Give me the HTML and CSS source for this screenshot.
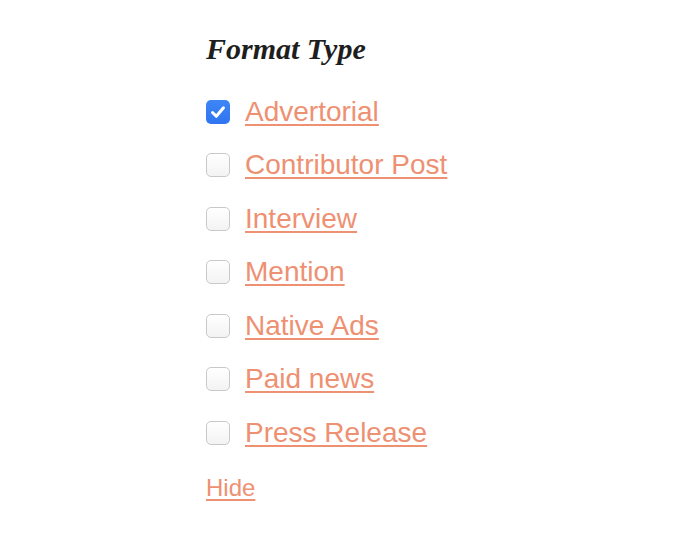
FILE: index.html
```html
<!DOCTYPE html>
<html>
<head>
<meta charset="utf-8">
<link rel="stylesheet" href="styles.css">
</head>
<body>
<section class="filter">
  <h2 class="filter-title">Format Type</h2>
  <ul class="options">
    <li class="option"><span class="box checked"><svg viewBox="0 0 24 24" width="24" height="24"><path d="M6.5 12.5 L10.3 16.3 L17.5 7.8" fill="none" stroke="#fff" stroke-width="3" stroke-linecap="round" stroke-linejoin="round"/></svg></span><a href="#" class="link">Advertorial</a></li>
    <li class="option"><span class="box"></span><a href="#" class="link">Contributor Post</a></li>
    <li class="option"><span class="box"></span><a href="#" class="link">Interview</a></li>
    <li class="option"><span class="box"></span><a href="#" class="link">Mention</a></li>
    <li class="option"><span class="box"></span><a href="#" class="link">Native Ads</a></li>
    <li class="option"><span class="box"></span><a href="#" class="link">Paid news</a></li>
    <li class="option"><span class="box"></span><a href="#" class="link">Press Release</a></li>
  </ul>
  <a href="#" class="hide">Hide</a>
</section>
</body>
</html>
```
FILE: styles.css
```css
html, body {
  margin: 0;
  padding: 0;
  background: #fff;
}
.filter {
  padding: 31px 0 0 206px;
  font-family: "Liberation Sans", Arial, sans-serif;
}
.filter-title {
  margin: 0 0 18px 0;
  font-family: "Liberation Serif", "Times New Roman", serif;
  font-style: italic;
  font-weight: bold;
  font-size: 30px;
  line-height: 36px;
  color: #1e1e1e;
}
.options {
  list-style: none;
  margin: 0 0 14px 0;
  padding: 0;
}
.option {
  display: flex;
  align-items: center;
  gap: 15px;
  padding: 10.75px 0;
  height: 32px;
}
.box {
  flex: none;
  width: 24px;
  height: 24px;
  box-sizing: border-box;
  border: 1px solid #c9c9c9;
  border-radius: 5px;
  background: linear-gradient(#ffffff, #f3f3f3);
  display: flex;
}
.box.checked {
  border: none;
  background: linear-gradient(#3e86f7, #2f74f1);
}
.link, .hide {
  color: #ee9072;
  text-decoration: underline;
  text-decoration-thickness: 2px;
  text-underline-offset: 3px;
}
.link {
  font-size: 28px;
  line-height: 32px;
}
.hide {
  display: inline-block;
  font-size: 24px;
  line-height: 28px;
  text-decoration-thickness: 1.5px;
}
```
